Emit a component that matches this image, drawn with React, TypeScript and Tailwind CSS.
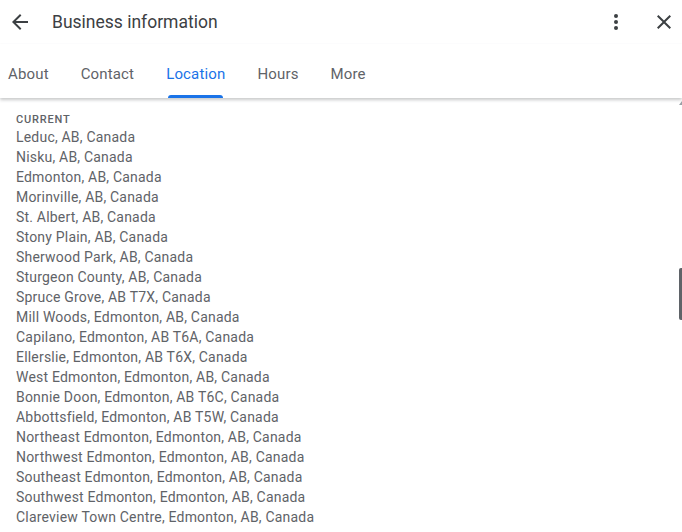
const places = [
  "Leduc, AB, Canada",
  "Nisku, AB, Canada",
  "Edmonton, AB, Canada",
  "Morinville, AB, Canada",
  "St. Albert, AB, Canada",
  "Stony Plain, AB, Canada",
  "Sherwood Park, AB, Canada",
  "Sturgeon County, AB, Canada",
  "Spruce Grove, AB T7X, Canada",
  "Mill Woods, Edmonton, AB, Canada",
  "Capilano, Edmonton, AB T6A, Canada",
  "Ellerslie, Edmonton, AB T6X, Canada",
  "West Edmonton, Edmonton, AB, Canada",
  "Bonnie Doon, Edmonton, AB T6C, Canada",
  "Abbottsfield, Edmonton, AB T5W, Canada",
  "Northeast Edmonton, Edmonton, AB, Canada",
  "Northwest Edmonton, Edmonton, AB, Canada",
  "Southeast Edmonton, Edmonton, AB, Canada",
  "Southwest Edmonton, Edmonton, AB, Canada",
  "Clareview Town Centre, Edmonton, AB, Canada",
];

const tabs = ["About", "Contact", "Location", "Hours", "More"];

export default function App() {
  return (
    <div
      className="w-[682px] h-[532px] overflow-hidden bg-white flex flex-col"
      style={{ fontFamily: "Roboto, 'Liberation Sans', sans-serif" }}
    >
      {/* Header */}
      <div className="h-[44px] flex items-center shrink-0">
        <button className="w-[40px] h-[40px] flex items-center justify-center">
          <svg width="24" height="24" viewBox="0 0 24 24">
            <path
              d="M20 11H7.83l5.59-5.59L12 4l-8 8 8 8 1.41-1.41L7.83 13H20v-2z"
              fill="#3c4043"
            />
          </svg>
        </button>
        <h1 className="ml-[12px] pt-[2px] text-[17.5px] text-[#3c4043] leading-none">Business information</h1>
        <div className="ml-auto flex items-center">
          <button className="w-[24px] h-[40px] flex items-center justify-center">
            <svg width="24" height="24" viewBox="0 0 24 24">
              <circle cx="12" cy="6" r="2" fill="#3c4043" />
              <circle cx="12" cy="12" r="2" fill="#3c4043" />
              <circle cx="12" cy="18" r="2" fill="#3c4043" />
            </svg>
          </button>
          <button className="ml-[24px] mr-[6px] w-[24px] h-[40px] flex items-center justify-center">
            <svg width="24" height="24" viewBox="0 0 24 24">
              <path
                d="M19 6.41 17.59 5 12 10.59 6.41 5 5 6.41 10.59 12 5 17.59 6.41 19 12 13.41 17.59 19 19 17.59 13.41 12z"
                fill="#3c4043"
              />
            </svg>
          </button>
        </div>
      </div>

      {/* Tabs */}
      <div className="h-[54px] flex items-end pl-[8px] shrink-0 relative z-10 shadow-[0_2px_3px_rgba(60,64,67,0.28)]">
        {tabs.map((t, i) => (
          <div
            key={t}
            className={`h-full flex flex-col justify-end ${i === 0 ? "pr-[16px]" : "px-[16px]"}`}
          >
            <div
              className={`text-[15px] tracking-[0.15px] leading-none pb-[13px] ${
                t === "Location" ? "text-[#1a73e8]" : "text-[#5f6368]"
              }`}
            >
              {t}
            </div>
            <div
              className={`h-[3px] rounded-t-[3px] mx-[2px] ${t === "Location" ? "bg-[#1a73e8]" : "bg-transparent"}`}
            />
          </div>
        ))}
      </div>

      {/* Content */}
      <div className="flex-1 flex min-h-0">
        <div className="flex-1 pl-[16px] pt-[15px]">
          <div className="text-[11px] font-medium tracking-[0.8px] text-[#5f6368] leading-[14px] h-[14px]">
            CURRENT
          </div>
          <div>
            {places.map((p) => (
              <div key={p} className="text-[14px] tracking-[0.2px] leading-[20px] text-[#5f6368]">
                {p}
              </div>
            ))}
          </div>
        </div>
        {/* Scrollbar */}
        <div className="w-[3px] relative">
          <div className="absolute right-0 top-[3px] w-0 h-0 border-l-[3px] border-r-[0px] border-b-[4px] border-l-transparent border-b-[#9aa0a6]" />
          <div className="absolute right-0 top-[170px] w-[3px] h-[52px] rounded-l-[2px] bg-[#5f6368]" />
        </div>
      </div>
    </div>
  );
}
